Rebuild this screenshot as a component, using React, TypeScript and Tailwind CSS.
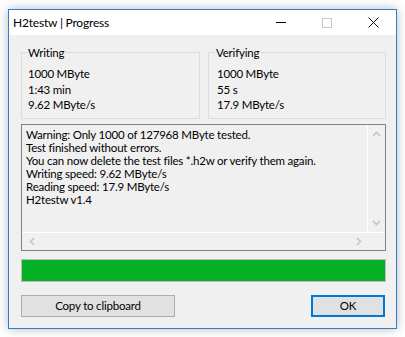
const ChevronUp = () => (
  <svg width="9" height="6" viewBox="0 0 9 6" fill="none" stroke="#c4c4c4" strokeWidth="1.6">
    <polyline points="1 5 4.5 1.5 8 5" />
  </svg>
);

const ChevronDown = () => (
  <svg width="9" height="6" viewBox="0 0 9 6" fill="none" stroke="#c4c4c4" strokeWidth="1.6">
    <polyline points="1 1 4.5 4.5 8 1" />
  </svg>
);

const ChevronLeft = () => (
  <svg width="6" height="9" viewBox="0 0 6 9" fill="none" stroke="#c4c4c4" strokeWidth="1.6">
    <polyline points="5 1 1.5 4.5 5 8" />
  </svg>
);

const ChevronRight = () => (
  <svg width="6" height="9" viewBox="0 0 6 9" fill="none" stroke="#c4c4c4" strokeWidth="1.6">
    <polyline points="1 1 4.5 4.5 1 8" />
  </svg>
);

// Group box in the classic win32 style (fieldset + legend)
const GroupBox = ({
  title,
  lines,
  width,
  legendInset,
  inset,
}: {
  title: string;
  lines: string[];
  width: string;
  legendInset: string;
  inset: string;
}) => (
  <fieldset className={`border border-[#dcdcdc] pb-[5px] ${width}`}>
    <legend className={`px-[1px] leading-[15px] ${legendInset}`}>{title}</legend>
    <div className={`pt-[6px] ${inset}`}>
      {lines.map((line) => (
        <div key={line} className="leading-[15.5px]">{line}</div>
      ))}
    </div>
  </fieldset>
);

const logLines = [
  "Warning: Only 1000 of 127968 MByte tested.",
  "Test finished without errors.",
  "You can now delete the test files *.h2w or verify them again.",
  "Writing speed: 9.62 MByte/s",
  "Reading speed: 17.9 MByte/s",
  "H2testw v1.4",
];

export default function App() {
  return (
    <div
      className="w-[405px] h-[337px] bg-white pl-2 pt-[9px] text-[11.5px] tracking-[-0.2px] text-black"
      style={{ fontFamily: '"Segoe UI", Lato, sans-serif' }}
    >
      <div className="w-[389px] h-[320px] border border-[#2f80cc] flex flex-col shadow-[0_0_10px_rgba(0,0,0,0.28)]">
        {/* Title bar */}
        <div className="h-[25px] bg-white flex items-center">
          <span className="pl-[4px] text-[12px]">H2testw | Progress</span>
          <div className="ml-auto flex h-full">
            <div className="w-[46px] flex items-center justify-center">
              <div className="w-[10px] h-px bg-black" />
            </div>
            <div className="w-[46px] flex items-center justify-center">
              <div className="w-[10px] h-[10px] border border-[#c8c8c8]" />
            </div>
            <div className="w-[46px] flex items-center justify-center">
              <svg width="11" height="11" viewBox="0 0 11 11" stroke="#111" strokeWidth="1">
                <line x1="0.5" y1="0.5" x2="10.5" y2="10.5" />
                <line x1="10.5" y1="0.5" x2="0.5" y2="10.5" />
              </svg>
            </div>
          </div>
        </div>

        {/* Client area */}
        <div className="flex-1 bg-[#f0f0f0] pl-3 pr-[10px] pt-[10px]">
          <div className="flex gap-2">
            <GroupBox
              title="Writing"
              lines={["1000 MByte", "1:43 min", "9.62 MByte/s"]}
              width="w-[179px]"
              legendInset="ml-[5px]"
              inset="pl-[6px]"
            />
            <GroupBox
              title="Verifying"
              lines={["1000 MByte", "55 s", "17.9 MByte/s"]}
              width="w-[178px]"
              legendInset="ml-[6px]"
              inset="pl-[8px]"
            />
          </div>

          {/* Log text box */}
          <div className="mt-[5px] w-[365px] h-[127px] border border-[#828282] flex flex-col">
            <div className="flex flex-1">
              <div className="flex-1 pl-[4px] pt-[3px] border-r border-b border-white leading-[13px] whitespace-nowrap overflow-hidden">
                {logLines.map((line) => (
                  <div key={line}>{line}</div>
                ))}
              </div>
              <div className="w-[17px] flex flex-col items-center justify-between py-[6px] border-b border-white">
                <ChevronUp />
                <ChevronDown />
              </div>
            </div>
            <div className="h-[17px] flex">
              <div className="flex-1 flex items-center justify-between pl-[7px] pr-[6px]">
                <ChevronLeft />
                <ChevronRight />
              </div>
              <div className="w-[17px]" />
            </div>
          </div>

          {/* Progress bar */}
          <div className="mt-[8px] w-[365px] h-[23px] border border-[#bcbcbc] bg-[#e6e6e6]">
            <div className="h-full w-full bg-[#06b025]" />
          </div>

          {/* Buttons */}
          <div className="mt-[13px] w-[365px] flex justify-between">
            <button className="w-[154px] h-[22px] border border-[#adadad] bg-[#e1e1e1] leading-none">
              Copy to clipboard
            </button>
            <button className="w-[74px] h-[22px] mr-px border-2 border-[#0078d7] bg-[#e1e1e1] leading-none">
              OK
            </button>
          </div>
        </div>
      </div>
    </div>
  );
}
